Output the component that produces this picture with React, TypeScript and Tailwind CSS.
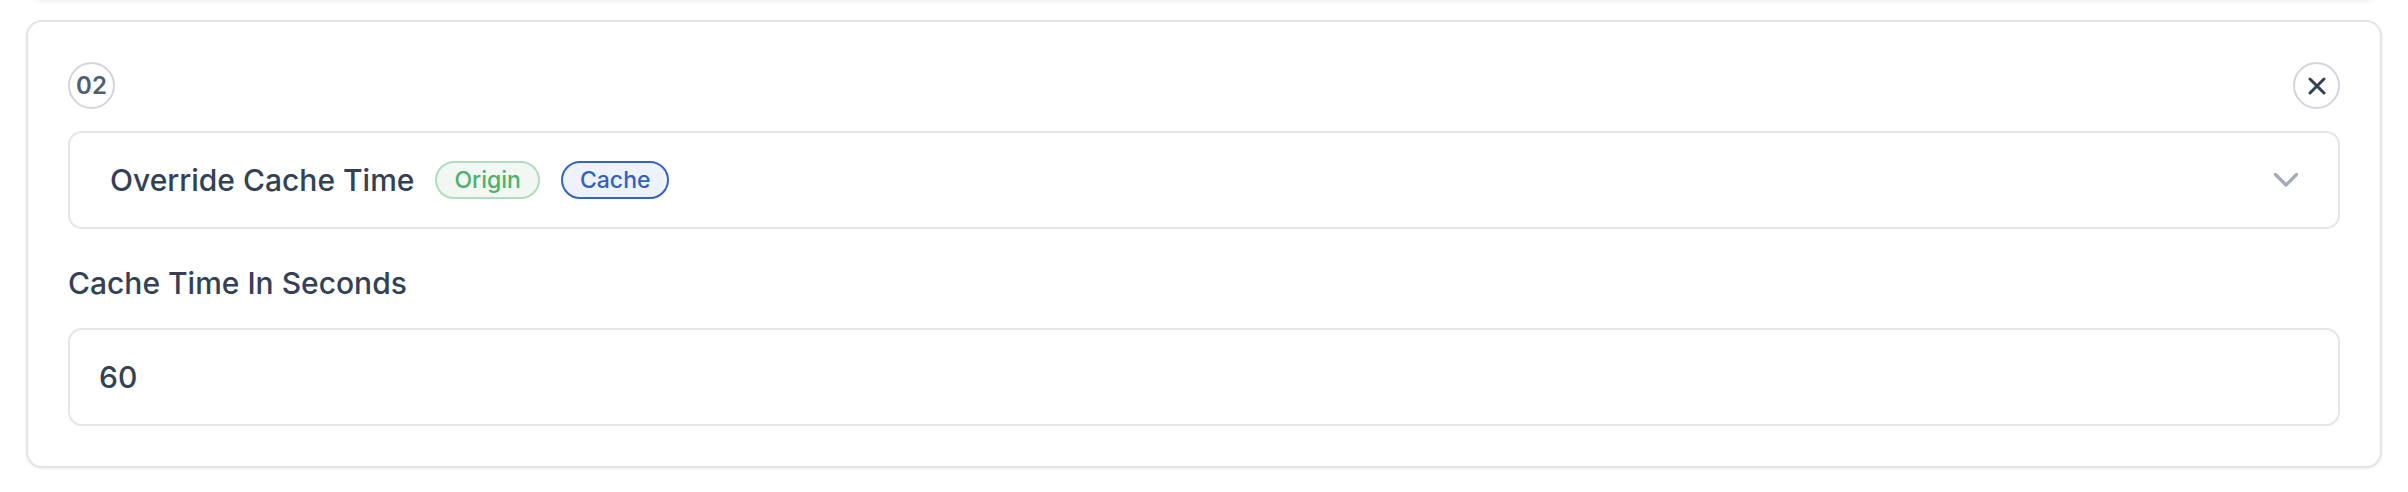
const Badge = ({ label, tone }: { label: string; tone: "green" | "blue" }) => (
  <span
    className={
      tone === "green"
        ? "inline-flex h-[38px] items-center rounded-full border-2 border-[#b0dcbc] bg-[#f1f8f3] px-[17px] text-[23px] font-medium text-[#4fb06c]"
        : "inline-flex h-[38px] items-center rounded-full border-2 border-[#3563bd] bg-[#edf2fc] px-[17px] text-[23px] font-medium text-[#3461b8]"
    }
  >
    {label}
  </span>
);

export default function App() {
  return (
    <div
      className="min-h-[492px] w-full overflow-hidden bg-white px-[26px] flex flex-col gap-[20px]"
      style={{ fontFamily: "Inter, 'Noto Sans', sans-serif" }}
    >
      {/* previous rule card, scrolled out of view */}
      <div className="-mt-[60px] h-[60px] rounded-2xl border-2 border-[#e2e5e9] bg-white shadow-[0_1px_4px_rgba(0,0,0,0.08)]" />

      <div className="rounded-[16px] border-2 border-[#e1e4e8] bg-white p-10 shadow-[0_1px_3px_rgba(0,0,0,0.08)]">
        <div className="flex items-center justify-between">
          <span className="flex h-[47px] w-[47px] items-center justify-center rounded-full border-2 border-[#d2d6dc] text-[24px] font-semibold text-[#525e6e]">
            02
          </span>
          <button className="flex h-[47px] w-[47px] items-center justify-center rounded-full border-2 border-[#d2d6dc] bg-white">
            <svg width="18" height="18" viewBox="0 0 18 18" fill="none">
              <path d="M2 2L16 16M16 2L2 16" stroke="#334155" strokeWidth="3" strokeLinecap="round" />
            </svg>
          </button>
        </div>

        <div className="mt-[22px] flex h-[98px] items-center justify-between rounded-[14px] border-2 border-[#e3e6ea] pl-10 pr-[39px]">
          <div className="flex items-center gap-[21px]">
            <span className="text-[30px] font-medium text-[#334155]">Override Cache Time</span>
            <div className="flex items-center gap-[21px]">
              <Badge label="Origin" tone="green" />
              <Badge label="Cache" tone="blue" />
            </div>
          </div>
          <svg width="26" height="16" viewBox="0 0 26 16" fill="none">
            <path d="M2.5 2.5L13 13L23.5 2.5" stroke="#a4abb6" strokeWidth="3.2" strokeLinecap="round" strokeLinejoin="round" />
          </svg>
        </div>

        <div className="mt-[34px] text-[30px] leading-[40px] font-medium text-[#334155]">Cache Time In Seconds</div>

        <div className="mt-[25px] flex h-[98px] items-center rounded-[14px] border-2 border-[#e3e6ea] px-[29px]">
          <span className="text-[30px] font-medium text-[#334155]">60</span>
        </div>
      </div>
    </div>
  );
}
